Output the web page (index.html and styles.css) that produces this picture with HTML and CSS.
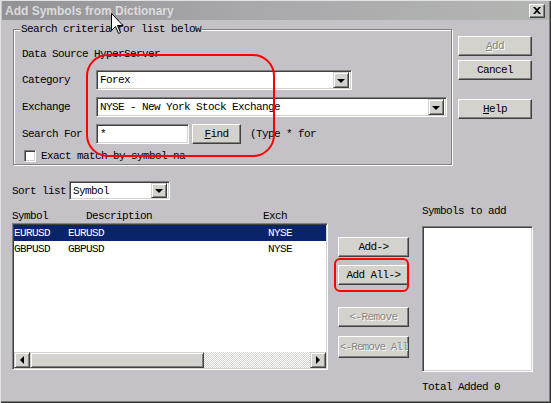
FILE: index.html
```html
<!DOCTYPE html>
<html>
<head>
<meta charset="utf-8">
<link rel="stylesheet" href="styles.css">
</head>
<body>
<div class="window">
  <div class="titlebar">
    <span class="title">Add Symbols from Dictionary</span>
    <span class="close-btn"><svg width="8" height="7" viewBox="0 0 8 7"><path d="M0 0h2l2 2 2-2h2L5 3.5 8 7H6L4 5 2 7H0l3-3.5z" fill="#000"/></svg></span>
  </div>

  <div class="top">
    <div class="group">
      <span class="legend">Search criteria for list below</span>
      <div class="ds">Data Source HyperServer</div>
      <div class="field">
        <span class="lbl">Category</span>
        <div class="combo combo-cat"><span class="val">Forex</span><span class="dd"><i class="tri-down"></i></span></div>
      </div>
      <div class="field">
        <span class="lbl">Exchange</span>
        <div class="combo combo-exch"><span class="val">NYSE - New York Stock Exchange</span><span class="dd"><i class="tri-down"></i></span></div>
      </div>
      <div class="field">
        <span class="lbl">Search For</span>
        <div class="input-box"><span class="val">*</span></div>
        <span class="btn btn-find"><u>F</u>ind</span>
        <span class="hint">(Type * for</span>
      </div>
      <div class="check-row">
        <span class="checkbox"></span>
        <span class="check-text">Exact match by symbol na</span>
      </div>
    </div>
    <div class="side-buttons">
      <span class="btn btn-side disabled"><u>A</u>dd</span>
      <span class="btn btn-side btn-cancel">Cancel</span>
      <span class="btn btn-side btn-help"><u>H</u>elp</span>
    </div>
  </div>

  <div class="bottom">
    <div class="left-col">
      <div class="sort-row">
        <span class="sort-lbl">Sort list</span>
        <div class="combo combo-sort"><span class="val">Symbol</span><span class="dd"><i class="tri-down"></i></span></div>
      </div>
      <div class="headers">
        <span>Symbol</span><span>Description</span><span>Exch</span>
      </div>
      <div class="list">
        <div class="lrow selected"><span>EURUSD</span><span>EURUSD</span><span>NYSE</span></div>
        <div class="lrow"><span>GBPUSD</span><span>GBPUSD</span><span>NYSE</span></div>
        <div class="hscroll">
          <span class="sb-btn"><i class="tri-left"></i></span>
          <span class="sb-thumb"></span>
          <span class="sb-track"></span>
          <span class="sb-btn"><i class="tri-right"></i></span>
        </div>
      </div>
    </div>

    <div class="mid-col">
      <span class="btn btn-mid">Add-&gt;</span>
      <span class="btn btn-mid btn-addall">Add All-&gt;</span>
      <span class="btn btn-mid disabled btn-remove">&lt;-Remove</span>
      <span class="btn btn-mid disabled btn-removeall">&lt;-Remove All</span>
    </div>

    <div class="right-col">
      <div class="rlabel">Symbols to add</div>
      <div class="list list-right"></div>
      <div class="total">Total Added 0</div>
    </div>
  </div>

  <div class="hl hl-search"></div>
  <div class="hl hl-addall"></div>
  <svg class="cursor" width="13" height="21" viewBox="0 0 13 21"><path d="M0.5 0.5V17.5L4.5 13.5L7.5 20.5L9.5 19.5L6.5 12.5H12L0.5 0.5Z" fill="#fff" stroke="#000" stroke-width="1"/></svg>
</div>
</body>
</html>
```

FILE: styles.css
```css
* { box-sizing: border-box; }
html, body { margin: 0; padding: 0; }
body {
  width: 551px;
  height: 403px;
  overflow: hidden;
  background: #c4c2c6;
  font-family: "Liberation Mono", "DejaVu Sans Mono", monospace;
  font-size: 11px;
  letter-spacing: -0.6px;
  color: #000;
}
.window {
  position: relative;
  width: 551px;
  height: 403px;
  background: #c4c2c6;
  box-shadow: inset 1px 1px 0 #e2e2e2, inset -1px -1px 0 #303030, inset -2px -2px 0 #7c7c7c;
  overflow: hidden;
}
.titlebar {
  margin: 1px 2px 0 2px;
  height: 19px;
  display: flex;
  align-items: center;
  padding: 0 4px 0 3px;
  background: linear-gradient(to right, #929195, #a9a8ac 45%, #b3b5b2);
}
.title {
  font-family: "Liberation Sans", Arial, sans-serif;
  font-weight: bold;
  font-size: 12px;
  letter-spacing: 0;
  color: #dcdcdc;
}
.close-btn {
  margin-left: auto;
  width: 16px;
  height: 14px;
  display: flex;
  align-items: center;
  justify-content: center;
  background: #d4d2cc;
  border: 1px solid;
  border-color: #fff #404040 #404040 #fff;
  box-shadow: inset -1px -1px 0 #808080;
}

/* ---------- top section ---------- */
.top {
  display: flex;
  align-items: flex-start;
  margin-top: 9px;
  padding-left: 13px;
}
.group {
  position: relative;
  width: 439px;
  height: 136px;
  border: 1px solid #808080;
  box-shadow: 1px 1px 0 #fff, inset 1px 1px 0 #fff;
  padding: 17px 0 0 8px;
}
.legend {
  position: absolute;
  top: -8px;
  left: 6px;
  padding: 0 1px;
  line-height: 14px;
  background: #c4c2c6;
}
.ds {
  height: 14px;
  line-height: 14px;
  margin-bottom: 9px;
}
.field {
  display: flex;
  align-items: center;
  height: 20px;
  margin-bottom: 7px;
}
.lbl {
  width: 74px;
  flex: none;
}
.combo, .input-box {
  position: relative;
  height: 20px;
  display: flex;
  align-items: center;
  background: #fff;
  border: 1px solid;
  border-color: #808080 #fff #fff #808080;
  box-shadow: inset 1px 1px 0 #404040, inset -1px -1px 0 #d4d2cc;
  padding: 0 2px 0 3px;
  flex: none;
}
.combo .val, .input-box .val { flex: 1; white-space: nowrap; overflow: hidden; }
.combo-cat { width: 256px; }
.combo-exch { width: 351px; }
.combo-sort { width: 101px; height: 19px; }
.input-box { width: 93px; }
.dd {
  width: 16px;
  height: 16px;
  flex: none;
  display: flex;
  align-items: center;
  justify-content: center;
  background: #d4d2cc;
  border: 1px solid;
  border-color: #d4d2cc #404040 #404040 #d4d2cc;
  box-shadow: inset 1px 1px 0 #fff, inset -1px -1px 0 #808080;
}
.combo-sort .dd { height: 15px; }
.tri-down {
  width: 0; height: 0;
  border-left: 4px solid transparent;
  border-right: 4px solid transparent;
  border-top: 4px solid #000;
  margin-top: 1px;
}
.btn {
  display: flex;
  align-items: center;
  justify-content: center;
  height: 20px;
  background: #d4d2cc;
  border: 1px solid;
  border-color: #fff #404040 #404040 #fff;
  box-shadow: inset -1px -1px 0 #808080;
  white-space: nowrap;
  overflow: hidden;
  flex: none;
}
.btn u { text-decoration: underline; text-underline-offset: 1px; }
.btn.disabled { color: #858585; text-shadow: 1px 1px 0 #fff; }
.btn-find { width: 49px; margin-left: 3px; }
.hint { margin-left: 9px; white-space: nowrap; }
.check-row {
  display: flex;
  align-items: center;
  height: 13px;
  margin-top: -2px;
}
.checkbox {
  width: 12px;
  height: 12px;
  margin-left: 2px;
  background: #fff;
  border: 1px solid;
  border-color: #808080 #fff #fff #808080;
  box-shadow: inset 1px 1px 0 #404040, inset -1px -1px 0 #d4d2cc;
}
.check-text { margin-left: 5px; white-space: nowrap; }

.side-buttons {
  display: flex;
  flex-direction: column;
  margin-left: 6px;
  padding-top: 7px;
}
.btn-side { width: 74px; }
.btn-cancel { margin-top: 4px; }
.btn-help { margin-top: 19px; }

/* ---------- bottom section ---------- */
.bottom {
  display: flex;
  align-items: flex-start;
  padding-left: 12px;
}
.left-col { width: 316px; }
.sort-row {
  display: flex;
  align-items: center;
  margin-top: 16px;
  height: 19px;
}
.sort-lbl { width: 57px; }
.headers {
  display: grid;
  grid-template-columns: 74px 177px auto;
  height: 14px;
  line-height: 14px;
  margin-top: 9px;
}
.list {
  height: 147px;
  background: #fff;
  border: 1px solid;
  border-color: #808080 #fff #fff #808080;
  box-shadow: inset 1px 1px 0 #404040, inset -1px -1px 0 #d4d2cc;
  padding: 1px;
  display: flex;
  flex-direction: column;
}
.lrow {
  display: grid;
  grid-template-columns: 54px 200px auto;
  height: 16px;
  line-height: 16px;
  white-space: nowrap;
}
.lrow.selected { background: #0a246a; color: #fff; }
.hscroll {
  margin-top: auto;
  height: 16px;
  display: flex;
}
.sb-btn {
  width: 16px;
  height: 16px;
  display: flex;
  align-items: center;
  justify-content: center;
  background: #d4d2cc;
  border: 1px solid;
  border-color: #d4d2cc #404040 #404040 #d4d2cc;
  box-shadow: inset 1px 1px 0 #fff, inset -1px -1px 0 #808080;
}
.sb-thumb {
  width: 174px;
  height: 16px;
  background: #d4d2cc;
  border: 1px solid;
  border-color: #d4d2cc #404040 #404040 #d4d2cc;
  box-shadow: inset 1px 1px 0 #fff, inset -1px -1px 0 #808080;
}
.sb-track {
  flex: 1;
  height: 16px;
  background: repeating-conic-gradient(#d4d2cc 0 25%, #fff 0 50%) 0 0 / 2px 2px;
}
.tri-left {
  width: 0; height: 0;
  border-top: 4px solid transparent;
  border-bottom: 4px solid transparent;
  border-right: 4px solid #000;
}
.tri-right {
  width: 0; height: 0;
  border-top: 4px solid transparent;
  border-bottom: 4px solid transparent;
  border-left: 4px solid #000;
}

.mid-col {
  display: flex;
  flex-direction: column;
  margin-left: 10px;
  padding-top: 72px;
}
.btn-mid { width: 71px; }
.btn-addall { margin-top: 8px; }
.btn-remove { margin-top: 22px; }
.btn-removeall {
  margin-top: 9px;
  height: 22px;
  justify-content: flex-start;
  padding-left: 1px;
  letter-spacing: -0.95px;
}

.right-col {
  margin-left: 13px;
  padding-top: 39px;
}
.rlabel { line-height: 14px; }
.list-right { width: 111px; height: 146px; margin-top: 8px; }
.total { margin-top: 8px; line-height: 14px; }

/* ---------- overlays ---------- */
.hl {
  position: absolute;
  border: 2px solid #ff0000;
  pointer-events: none;
}
.hl-search { left: 86px; top: 54px; width: 189px; height: 103px; border-radius: 22px; }
.hl-addall { left: 334px; top: 258px; width: 75px; height: 34px; border-radius: 6px; }
.cursor { position: absolute; left: 111px; top: 13px; }
```
